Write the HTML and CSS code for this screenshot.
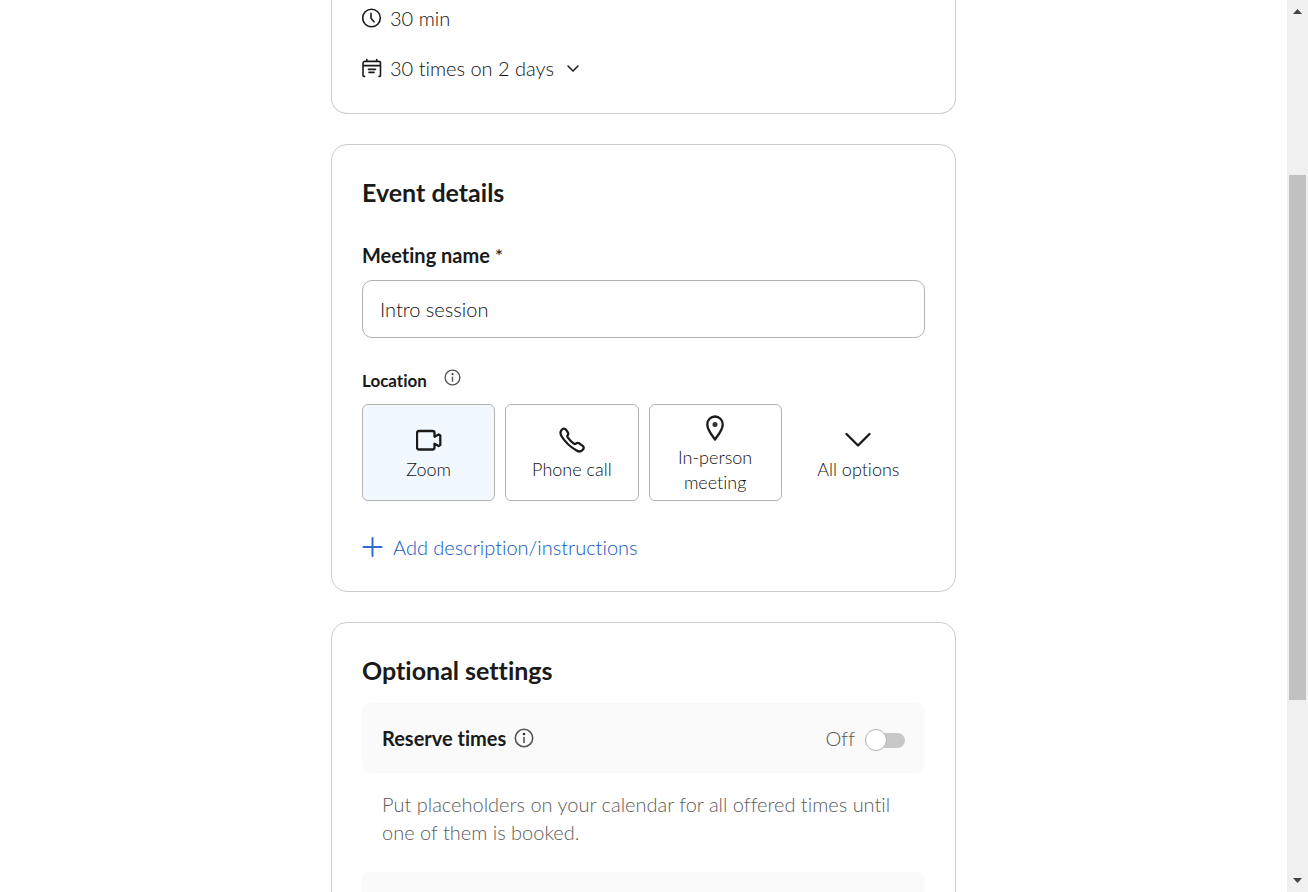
FILE: index.html
```html
<!DOCTYPE html>
<html lang="en">
  <head>
    <meta charset="UTF-8" />
    <meta name="viewport" content="width=device-width, initial-scale=1.0" />
    <title>Intro session</title>
    <link rel="stylesheet" href="styles.css">
  </head>
  <body>
    <main class="content">
      <section class="card card-summary">
        <div class="summary-row">
          <svg class="icon-small" viewBox="0 0 20 20">
            <circle cx="9.5" cy="10" r="8.8" />
            <path d="M9 5.4v4.800l3 3.600" />
          </svg>
          <span>30 min</span>
        </div>
        <button type="button" class="summary-row summary-toggle">
          <svg class="icon-small" viewBox="0 0 20 20">
            <path d="M2.500 18.4H2a1 1 0 0 1-1-1V5.4a2 2 0 0 1 2-2h13.5a2 2 0 0 1 2 2v12a1 1 0 0 1-1 1H17M1 7.600h17.500M4.800 1.500v2M14.700 1.500v2M6.500 11.400h7M7 14.400h5" />
          </svg>
          <span>30 times on 2 days</span>
          <svg class="icon-chevron" viewBox="0 0 14 20">
            <path d="M2 8l5 5 5-5" />
          </svg>
        </button>
      </section>

      <section class="card">
        <h2>Event details</h2>
        <label class="field-label" for="meeting-name">Meeting name <span class="required">*</span></label>
        <input class="text-input" id="meeting-name" type="text" value="Intro session" />

        <div class="location-label">
          <span id="location-label">Location</span>
          <svg class="icon-info icon-info-small" viewBox="0 0 20 20">
            <circle cx="10" cy="10" r="8.7" />
            <path d="M10 9.500v5" />
            <circle class="dot" cx="10" cy="6" r="1.3" />
          </svg>
        </div>
        <div class="location-list" role="group" aria-labelledby="location-label">
          <button type="button" class="location location-selected">
            <svg class="icon-large" viewBox="0 0 26 26">
              <path d="M3 4h13.500a2 2 0 0 1 2 2v3.800l4.200-2.300 1.600 1v9.500l-1.600 1-4.200-2.300v3.800a2 2 0 0 1-2 2H3a2 2 0 0 1-2-2V6a2 2 0 0 1 2-2z" />
            </svg>
            Zoom
          </button>
          <button type="button" class="location">
            <svg class="icon-large" viewBox="0 0 26 26">
              <path d="M2.300 3.300C3.700 1.300 5.700 1 7.100 2.800l1.700 2.500c.8 1.300.4 2.300-.2 3.100-.5.800-.2 1.500.3 2.200 1.700 2.400 3.600 4.300 5.900 6 .7.500 1.400.6 2 .1 1-.8 2-1.100 3.200-.4l3.400 2.300c1.700 1.300 1.700 2.700.4 4.200-1.700 2-3.900 2.100-6.200.7C11.400 20 6.400 15.300 2.700 9.500 1.300 7.200 1 5.200 2.300 3.300z" />
            </svg>
            Phone call
          </button>
          <button type="button" class="location">
            <svg class="icon-large" viewBox="0 0 26 26">
              <path d="M13 24.500C9.800 19.800 5.300 15.300 5.300 9.500c0-4.700 3.400-8 7.700-8s7.700 3.300 7.700 8c0 5.800-4.500 10.300-7.700 15z" />
              <circle class="dot" cx="13" cy="9.500" r="2.500" />
            </svg>
            In-person meeting
          </button>
          <button type="button" class="location location-more">
            <svg class="icon-large" viewBox="0 0 26 26">
              <path d="M1.500 7L13 18.500 24.500 7" />
            </svg>
            All options
          </button>
        </div>

        <button type="button" class="add-description">
          <svg class="icon-plus" viewBox="0 0 20 20">
            <path d="M10 1v18M1 10h18" />
          </svg>
          Add description/instructions
        </button>
      </section>

      <section class="card">
        <h2>Optional settings</h2>
        <div class="setting">
          <label class="setting-name" for="reserve-times">Reserve times</label>
          <svg class="icon-info" viewBox="0 0 20 20">
            <circle cx="10" cy="10" r="8.7" />
            <path d="M10 9.500v5" />
            <circle class="dot" cx="10" cy="6" r="1.3" />
          </svg>
          <span class="setting-state">Off</span>
          <input class="switch" id="reserve-times" type="checkbox" />
        </div>
        <p class="setting-text">
          Put placeholders on your calendar for all offered times until one of them is booked.
        </p>
        <div class="setting"></div>
      </section>
    </main>

    <div class="scrollbar">
      <svg class="scroll-arrow" viewBox="0 0 21 20">
        <path d="M6 14l4.500-5 4.500 5z" />
      </svg>
      <div class="scroll-before"></div>
      <div class="scroll-thumb"></div>
      <div class="scroll-after"></div>
      <svg class="scroll-arrow" viewBox="0 0 21 20">
        <path d="M6 6l4.500 5L15 6z" />
      </svg>
    </div>
  </body>
</html>
```

FILE: styles.css
```css
* {
  box-sizing: border-box;
}

body {
  display: flex;
  height: 100vh;
  margin: 0;
  overflow: hidden;
  background-color: #fff;
  color: #111;
  font-family: Lato, "Liberation Sans", sans-serif;
  font-size: 20px;
  font-weight: 300;
  font-variant-ligatures: none;
  line-height: 28px;
}

button,
input {
  margin: 0;
  color: inherit;
  font: inherit;
  font-variant-ligatures: inherit;
}

button {
  padding: 0;
  border: none;
  background: none;
  cursor: pointer;
}

svg {
  flex-shrink: 0;
  fill: none;
  stroke: #1a1a1a;
  stroke-width: 2;
  stroke-linecap: round;
  stroke-linejoin: round;
}

.content {
  flex: 1;
  display: flex;
  flex-direction: column;
  align-items: center;
  gap: 30px;
  overflow: hidden;
}

/***********
  Cards
************/

.card {
  flex-shrink: 0;
  width: 100%;
  max-width: 625px;
  padding: 30px;
  border: 1px solid #ccc;
  border-radius: 16px;
}

.card h2 {
  margin: 0;
  color: #1a1a1a;
  font-size: 25px;
  font-weight: 700;
  line-height: 35px;
}

.card-summary {
  display: flex;
  flex-direction: column;
  align-items: flex-start;
  gap: 22px;
  padding: 4px 30px 31px;
  border-top: none;
  border-radius: 0 0 16px 16px;
}

.summary-row {
  display: flex;
  align-items: center;
  gap: 8px;
}

.icon-small {
  width: 20px;
  height: 20px;
  stroke-width: 1.6;
}

.icon-chevron {
  width: 14px;
  height: 20px;
  margin-left: 4px;
  stroke-width: 1.5;
}

/***********
  Event details
************/

.field-label {
  display: block;
  margin: 31px 0 11px;
  color: #1a1a1a;
  font-weight: 700;
}

.required {
  font-weight: 400;
}

.text-input {
  display: block;
  width: 100%;
  height: 58px;
  padding: 0 17px;
  border: 1px solid #b3b3b3;
  border-radius: 10px;
  background-color: #fff;
}

.location-label {
  display: flex;
  gap: 17px;
  margin: 29px 0 9px;
  color: #1a1a1a;
  font-size: 17px;
  font-weight: 700;
}

.location-list {
  display: grid;
  grid-template-columns: repeat(4, 1fr);
  gap: 10px;
}

.location {
  display: flex;
  flex-direction: column;
  align-items: center;
  justify-content: center;
  gap: 4px;
  height: 97px;
  padding: 4px 20px 0;
  border: 1px solid #b3b3b3;
  border-radius: 6px;
  font-size: 18px;
  line-height: 25px;
}

.location-selected {
  background-color: #f2f8ff;
}

.location-more {
  border-color: transparent;
}

.icon-large {
  width: 26px;
  height: 26px;
  stroke-width: 2.3;
}

.icon-info {
  width: 20px;
  height: 20px;
  stroke: #555;
  stroke-width: 1.6;
}

.icon-info-small {
  width: 17px;
  height: 17px;
  margin-top: 2px;
}

.dot {
  fill: #333;
  stroke: none;
}

.add-description {
  display: flex;
  align-items: center;
  gap: 10px;
  margin-top: 32px;
  color: #1257c9;
}

.icon-plus {
  width: 21px;
  height: 20px;
  stroke: #2f6bd0;
}

/***********
  Optional settings
************/

.setting {
  display: flex;
  align-items: center;
  height: 70px;
  margin-top: 15px;
  padding: 0 20px;
  border-radius: 8px;
  background-color: #fafafa;
}

.setting-name {
  margin-right: 8px;
  color: #1a1a1a;
  font-weight: 700;
}

.setting-state {
  margin: 0 10px 0 auto;
  color: #555;
}

.setting-text {
  margin: 0;
  padding: 17px 20px 11px;
  color: #5c5c5c;
}

.switch {
  appearance: none;
  display: flex;
  align-items: center;
  width: 40px;
  height: 15px;
  margin-top: 4px;
  border-radius: 8px;
  background-color: #c8c8c8;
  cursor: pointer;
}

.switch::before {
  content: "";
  width: 20px;
  height: 20px;
  border: 1px solid #b3b3b3;
  border-radius: 50%;
  background-color: #fff;
}

.switch:checked {
  justify-content: flex-end;
  background-color: #2f6bd0;
}

/***********
  Scrollbar
************/

.scrollbar {
  display: flex;
  flex-direction: column;
  width: 21px;
  background-color: #f0f0f0;
}

.scroll-arrow {
  width: 21px;
  height: 20px;
  fill: #444;
  stroke: none;
}

.scroll-before {
  flex: 155;
}

.scroll-thumb {
  flex: 525;
  margin: 0 2px;
  background-color: #c1c1c1;
}

.scroll-after {
  flex: 172;
}
```
